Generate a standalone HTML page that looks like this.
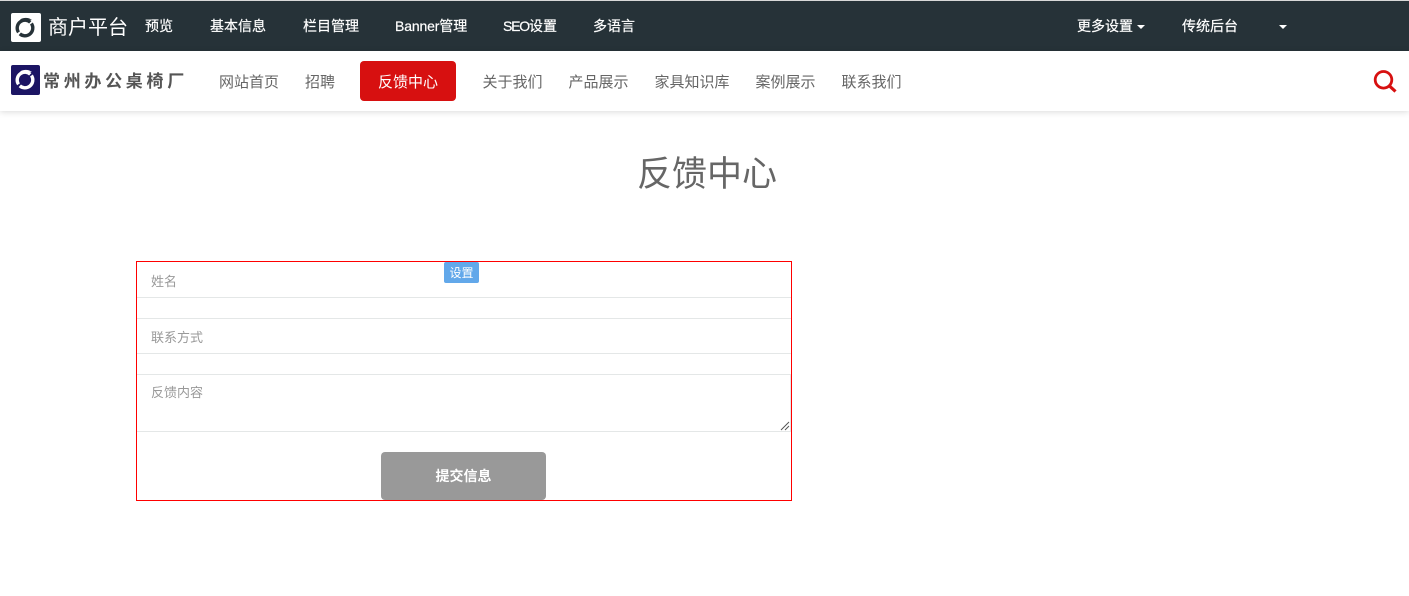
<!DOCTYPE html>
<html lang="zh-CN">
<head>
<meta charset="utf-8">
<style>
html,body{margin:0;padding:0;width:1409px;height:596px;overflow:hidden;background:#fff}
body{position:relative;font-family:"Liberation Sans","Noto Sans CJK SC",sans-serif}
div{position:absolute;white-space:nowrap}
i{font-style:normal}
#top{left:0;top:1px;width:1409px;height:50px;background:#263238}
#line{left:0;top:0;width:1409px;height:1px;background:#d8d8d8}
#nav{left:0;top:51px;width:1409px;height:60px;background:#fff;box-shadow:0 1px 6px rgba(0,0,0,.15)}
.t{top:16px;color:#fff;font-size:14px;line-height:20px;-webkit-text-stroke:.2px #fff}
.n{top:72px;color:#666;font-size:15px;line-height:21px}
.caret{width:0;height:0;border-left:4px solid transparent;border-right:4px solid transparent;border-top:4px solid #fff;top:25px}
.rule{left:137px;width:654px;height:1px;background:#e4e7e7}
.ph{left:151px;color:#999;font-size:13px;line-height:18px}
</style>
</head>
<body>
<div id="line"></div>
<div id="top"></div>
<div id="nav"></div>

<svg style="position:absolute;left:11px;top:13px" width="30" height="30" viewBox="0 0 30 30">
<rect width="30" height="29" rx="2" fill="#fff"/>
<circle cx="14" cy="15" r="7.8" fill="none" stroke="#263238" stroke-width="3.4" stroke-dasharray="22.5 2" transform="rotate(-35 14 15)"/>
<path d="M9 6.5C13 4 18 4.5 21 7L16 6.5C13 6.5 11 6.5 9 6.5Z" fill="#263238"/>
</svg>
<div style="left:48px;top:14px;color:#fff;font-size:20px;line-height:28px">商户平台</div>
<div class="t" style="left:145px">预览</div>
<div class="t" style="left:210px">基本信息</div>
<div class="t" style="left:303px">栏目管理</div>
<div class="t" style="left:395px"><i style="letter-spacing:-.15px">Banner</i>管理</div>
<div class="t" style="left:503px"><i style="letter-spacing:-1.2px">SEO</i>设置</div>
<div class="t" style="left:593px">多语言</div>
<div class="t" style="left:1077px">更多设置</div>
<div class="caret" style="left:1137px"></div>
<div class="t" style="left:1182px">传统后台</div>
<div class="caret" style="left:1279px"></div>

<svg style="position:absolute;left:11px;top:65px" width="29" height="30" viewBox="0 0 29 30">
<rect width="29" height="30" rx="2" fill="#1c1564"/>
<circle cx="14" cy="15" r="7.8" fill="none" stroke="#fff" stroke-width="3.4" stroke-dasharray="22.5 2" transform="rotate(-35 14 15)"/>
<path d="M9 6.5C13 4 18 4.5 21 7L16 6.5C13 6.5 11 6.5 9 6.5Z" fill="#fff"/>
</svg>
<div style="left:43px;top:71px;color:#555;font-size:17px;line-height:22px;font-weight:bold;letter-spacing:3.7px">常州办公桌椅厂</div>

<div class="n" style="left:219px">网站首页</div>
<div class="n" style="left:305px">招聘</div>
<div style="left:360px;top:61px;width:96px;height:40px;background:#d71010;border-radius:4px"></div>
<div class="n" style="left:378px;color:#fff">反馈中心</div>
<div class="n" style="left:482.5px">关于我们</div>
<div class="n" style="left:568.5px">产品展示</div>
<div class="n" style="left:654.5px">家具知识库</div>
<div class="n" style="left:755.5px">案例展示</div>
<div class="n" style="left:841.5px">联系我们</div>

<svg style="position:absolute;left:1373px;top:70px" width="24" height="24" viewBox="0 0 24 24">
<circle cx="10.5" cy="9.8" r="8.3" fill="none" stroke="#d71010" stroke-width="2.8"/>
<path d="M16.5 16L22.5 21.5" fill="none" stroke="#d71010" stroke-width="3.2"/>
</svg>

<div style="left:0;top:152px;width:1414px;text-align:center;color:#666;font-size:35px;line-height:46px">反馈中心</div>

<div style="left:136px;top:261px;width:654px;height:238px;border:1px solid #f00"></div>
<div class="ph" style="top:273px">姓名</div>
<div class="rule" style="top:297px"></div>
<div class="rule" style="top:318px"></div>
<div class="ph" style="top:329px">联系方式</div>
<div class="rule" style="top:353px"></div>
<div class="rule" style="top:374px"></div>
<div class="ph" style="top:384px">反馈内容</div>
<div class="rule" style="top:431px"></div>
<div style="left:790px;top:374px;width:1px;height:58px;background:#e4e7e7"></div>
<svg style="position:absolute;left:780px;top:421px" width="10" height="10" viewBox="0 0 10 10">
<path d="M1 9L9 1M5 9L9 5" stroke="#555" stroke-width="1" fill="none"/>
</svg>

<div style="left:444px;top:262px;width:35px;height:21px;background:#62a8ea;border-radius:2px;color:#fff;font-size:12px;line-height:22px;text-align:center">设置</div>

<div style="left:381px;top:452px;width:165px;height:48px;background:#999;border-radius:4px;color:#fff;font-size:14px;font-weight:bold;line-height:48px;text-align:center">提交信息</div>
</body>
</html>
